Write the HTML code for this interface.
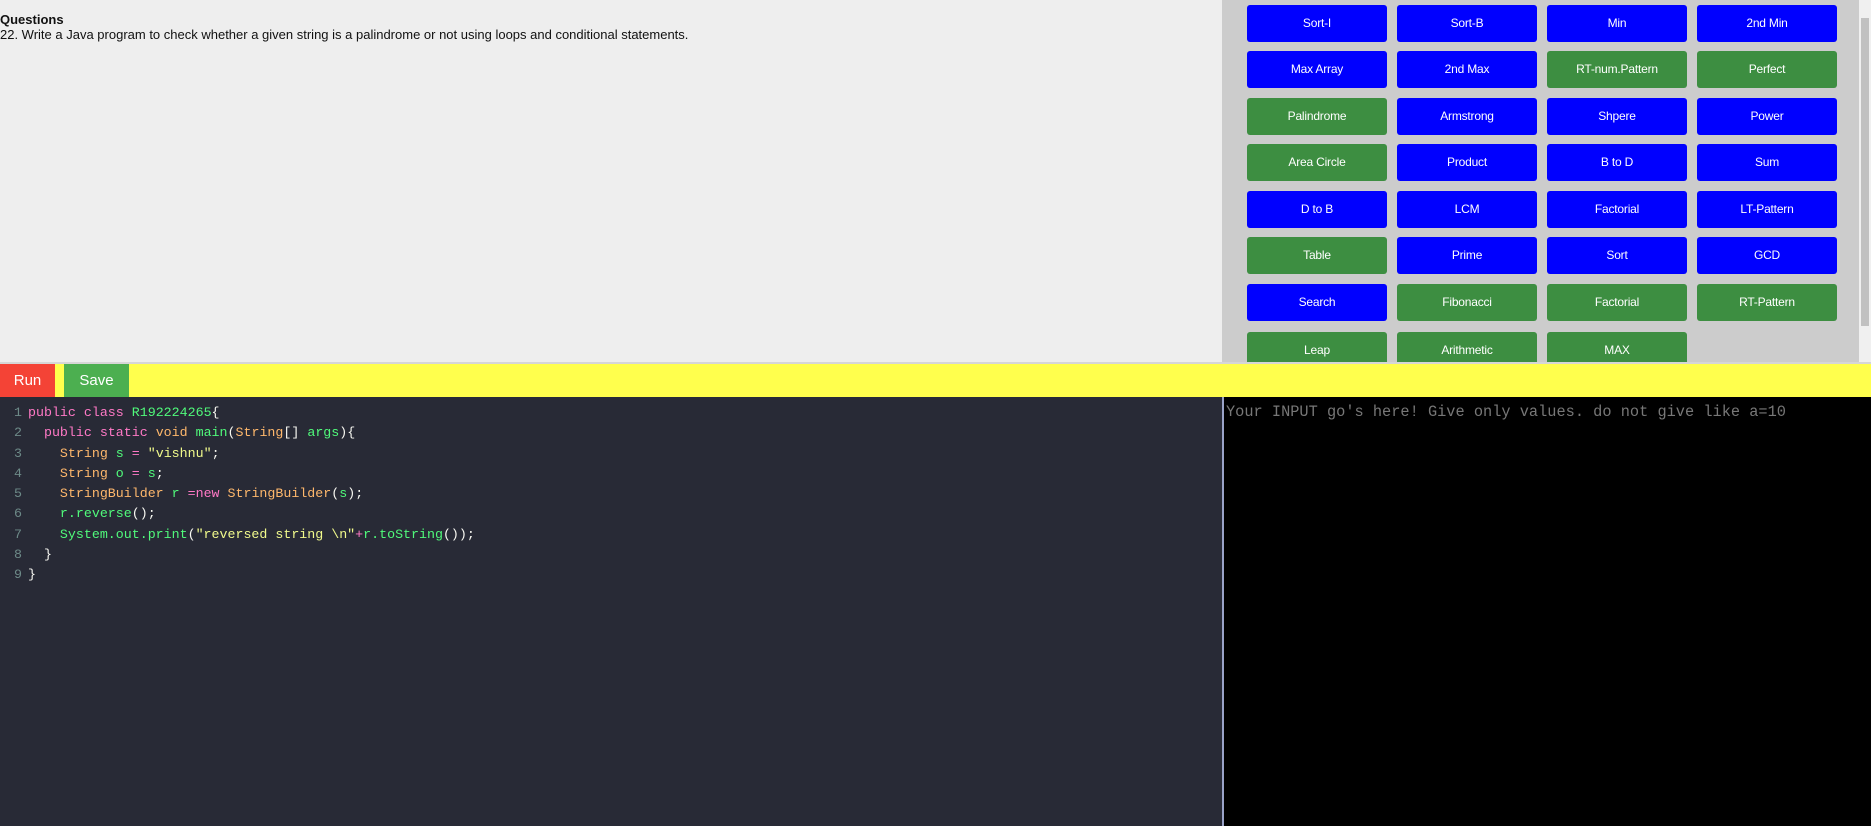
<!DOCTYPE html>
<html><head><meta charset="utf-8"><style>
*{margin:0;padding:0;box-sizing:border-box}
body{width:1871px;height:826px;overflow:hidden;background:#eee;font-family:"Liberation Sans",Arial,sans-serif;position:relative}
#q{position:absolute;left:0;top:12px;font-size:13px;color:#111;line-height:15px}
#q b{display:block}
#panel{position:absolute;left:1222px;top:0;width:649px;height:362px;background:#ccc;overflow:hidden}
.b{position:absolute;width:140px;height:37px;border-radius:3px;color:#fff;font-size:12px;text-align:center;line-height:37px;letter-spacing:-0.2px}
.bl{background:#0000ff}.gr{background:#3d8e41}
#sb{position:absolute;right:0;top:0;width:12px;height:362px;background:#f0f0f0}
#sb i{position:absolute;left:2px;top:18px;width:8px;height:308px;background:#c1c1c1}
#sep{position:absolute;left:0;top:362px;width:1871px;height:2px;background:#d6d6d6}
#bar{position:absolute;left:0;top:364px;width:1871px;height:33px;background:#ffff4d}
#run{position:absolute;left:0;top:0;width:55px;height:33px;background:#f44336;color:#fff;font-size:15px;line-height:33px;text-align:center}
#save{position:absolute;left:64px;top:0;width:65px;height:33px;background:#4caf50;color:#fff;font-size:15px;line-height:33px;text-align:center}
#ed{position:absolute;left:0;top:397px;width:1222px;height:429px;background:#282a36}
#code{position:absolute;left:0;top:6px;font-family:"Liberation Mono",monospace;font-size:13.3px;line-height:20.3px;color:#f8f8f2;white-space:pre}
.n{display:inline-block;width:28px;text-align:right;padding-right:6px;color:#6d8a88}
.k{color:#ff79c6}.g{color:#50fa7b}.o{color:#ffb86c}.s{color:#f1fa8c}
#inp{position:absolute;left:1222px;top:397px;width:649px;height:429px;background:#000;border-left:2px solid #9aa3c8}
#inp span{position:absolute;left:2px;top:6px;font-family:"Liberation Mono",monospace;font-size:15.3px;color:#777;white-space:pre}
</style></head><body>
<div id="q"><b>Questions</b>22. Write a Java program to check whether a given string is a palindrome or not using loops and conditional statements.</div>
<div id="panel">
<div class="b bl" style="left:25px;top:5px">Sort-I</div><div class="b bl" style="left:175px;top:5px">Sort-B</div><div class="b bl" style="left:325px;top:5px">Min</div><div class="b bl" style="left:475px;top:5px">2nd Min</div>
<div class="b bl" style="left:25px;top:51px">Max Array</div><div class="b bl" style="left:175px;top:51px">2nd Max</div><div class="b gr" style="left:325px;top:51px">RT-num.Pattern</div><div class="b gr" style="left:475px;top:51px">Perfect</div>
<div class="b gr" style="left:25px;top:98px">Palindrome</div><div class="b bl" style="left:175px;top:98px">Armstrong</div><div class="b bl" style="left:325px;top:98px">Shpere</div><div class="b bl" style="left:475px;top:98px">Power</div>
<div class="b gr" style="left:25px;top:144px">Area Circle</div><div class="b bl" style="left:175px;top:144px">Product</div><div class="b bl" style="left:325px;top:144px">B to D</div><div class="b bl" style="left:475px;top:144px">Sum</div>
<div class="b bl" style="left:25px;top:191px">D to B</div><div class="b bl" style="left:175px;top:191px">LCM</div><div class="b bl" style="left:325px;top:191px">Factorial</div><div class="b bl" style="left:475px;top:191px">LT-Pattern</div>
<div class="b gr" style="left:25px;top:237px">Table</div><div class="b bl" style="left:175px;top:237px">Prime</div><div class="b bl" style="left:325px;top:237px">Sort</div><div class="b bl" style="left:475px;top:237px">GCD</div>
<div class="b bl" style="left:25px;top:284px">Search</div><div class="b gr" style="left:175px;top:284px">Fibonacci</div><div class="b gr" style="left:325px;top:284px">Factorial</div><div class="b gr" style="left:475px;top:284px">RT-Pattern</div>
<div class="b gr" style="left:25px;top:332px">Leap</div><div class="b gr" style="left:175px;top:332px">Arithmetic</div><div class="b gr" style="left:325px;top:332px">MAX</div>
<div id="sb"><i></i></div>
</div>
<div id="sep"></div>
<div id="bar"><div id="run">Run</div><div id="save">Save</div></div>
<div id="ed"><div id="code"><span class="n">1</span><span class="k">public class</span> <span class="g">R192224265</span>{
<span class="n">2</span>  <span class="k">public static</span> <span class="o">void</span> <span class="g">main</span>(<span class="o">String</span>[] <span class="g">args</span>){
<span class="n">3</span>    <span class="o">String</span> <span class="g">s</span> <span class="k">=</span> <span class="s">"vishnu"</span>;
<span class="n">4</span>    <span class="o">String</span> <span class="g">o</span> <span class="k">=</span> <span class="g">s</span>;
<span class="n">5</span>    <span class="o">StringBuilder</span> <span class="g">r</span> <span class="k">=new</span> <span class="o">StringBuilder</span>(<span class="g">s</span>);
<span class="n">6</span>    <span class="g">r.reverse</span>();
<span class="n">7</span>    <span class="g">System.out.print</span>(<span class="s">"reversed string \n"</span><span class="k">+</span><span class="g">r.toString</span>());
<span class="n">8</span>  }
<span class="n">9</span>}</div></div>
<div id="inp"><span>Your INPUT go's here! Give only values. do not give like a=10</span></div>
</body></html>
